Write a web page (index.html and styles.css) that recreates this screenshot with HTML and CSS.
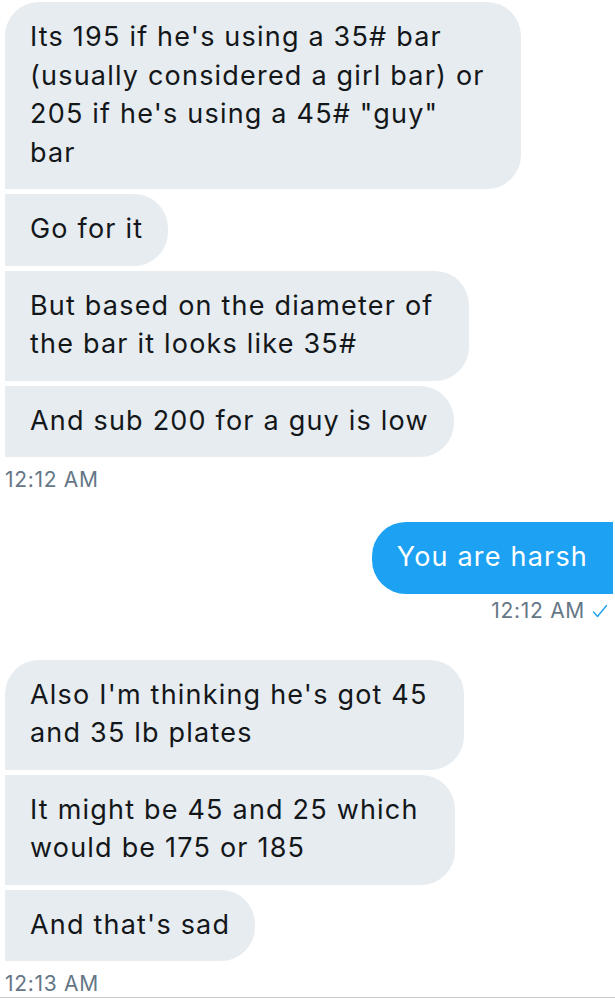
FILE: index.html
```html
<!DOCTYPE html>
<html lang="en">
<head>
<meta charset="utf-8">
<title>Messages</title>
<link rel="stylesheet" href="styles.css">
</head>
<body>
<main class="thread">
  <section class="group received">
    <div class="bubble first wrapped">Its 195 if he's using a 35# bar<br>(usually considered a girl bar) or<br>205 if he's using a 45# "guy"<br>bar</div>
    <div class="bubble">Go for it</div>
    <div class="bubble wrapped">But based on the diameter of<br>the bar it looks like 35#</div>
    <div class="bubble">And sub 200 for a guy is low</div>
    <div class="meta">12:12 AM</div>
  </section>
  <section class="group sent">
    <div class="bubble">You are harsh</div>
    <div class="meta">12:12 AM
      <svg class="check" width="16" height="14" viewBox="0 0 16 14"><polyline points="1.5,8 5.5,12.5 14.5,1.5" fill="none" stroke="#1da1f2" stroke-width="1.4" stroke-linecap="round" stroke-linejoin="round"/></svg>
    </div>
  </section>
  <section class="group received">
    <div class="bubble first wrapped">Also I'm thinking he's got 45<br>and 35 lb plates</div>
    <div class="bubble wrapped">It might be 45 and 25 which<br>would be 175 or 185</div>
    <div class="bubble">And that's sad</div>
    <div class="meta">12:13 AM</div>
  </section>
  <div class="composer"></div>
</main>
</body>
</html>
```

FILE: styles.css
```css
html, body {
  margin: 0;
  padding: 0;
  background: #ffffff;
}

body {
  font-family: Inter, "Noto Sans", sans-serif;
  color: #14171a;
  width: 615px;
  height: 1004px;
  overflow: hidden;
}

.thread {
  display: flex;
  flex-direction: column;
  padding-top: 2px;
}

.group {
  display: flex;
  flex-direction: column;
  gap: 5px;
}

.group.received {
  align-items: flex-start;
  padding-left: 5px;
}

.group.sent {
  align-items: flex-end;
  padding-right: 2px;
  margin-top: 30px;
}

.group.sent + .group.received {
  margin-top: 37px;
}

.bubble {
  font-size: 27px;
  line-height: 38.5px;
  padding: 16px 25px 17px 25px;
  white-space: nowrap;
  letter-spacing: 1.2px;
}

.bubble.wrapped {
  padding-right: 36px;
}

.received .bubble {
  background: #e6ecf0;
  color: #14171a;
  border-radius: 0 34px 34px 0;
}

.received .bubble.first {
  border-top-left-radius: 34px;
}

.sent .bubble {
  background: #1da1f2;
  color: #ffffff;
  border-radius: 34px 0 0 34px;
}

.meta {
  font-size: 21px;
  line-height: 24px;
  letter-spacing: 0.7px;
  color: #657786;
  margin-top: 6px;
  display: flex;
  align-items: center;
  gap: 7px;
}

.sent .meta {
  margin-top: 0;
  padding-right: 5px;
}

.check {
  display: block;
}

.composer {
  margin-top: 1px;
  border-top: 1px solid #c8ced3;
  height: 10px;
}
```
